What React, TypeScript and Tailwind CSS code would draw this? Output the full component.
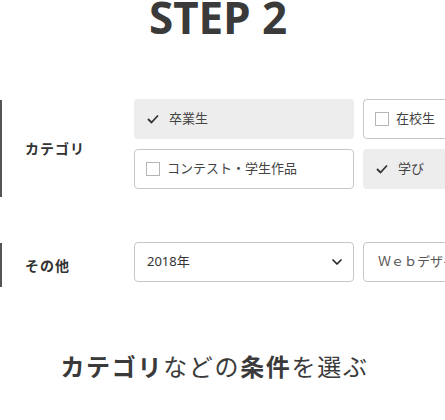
import { ChevronDown } from "lucide-react";

const Check = () => (
  <svg width="12" height="10" viewBox="0 0 12 10" className="shrink-0">
    <polyline points="1,5 4.5,8.5 11,1.5" fill="none" stroke="#333" strokeWidth="1.8" />
  </svg>
);

const Box = () => (
  <span className="w-[14px] h-[14px] border border-[#b5b5b5] bg-white shrink-0" />
);

interface Item {
  label: string;
  checked: boolean;
}

const items: Item[] = [
  { label: "卒業生", checked: true },
  { label: "在校生", checked: false },
  { label: "コンテスト・学生作品", checked: false },
  { label: "学び", checked: true },
];

const App = () => {
  return (
    <div className="w-[445px] h-[420px] overflow-hidden bg-white text-[#333] font-['Noto_Sans','Noto_Sans_CJK_JP',sans-serif]">
      <h1 className="text-center text-[44px] leading-[34px] font-bold text-[#3a3a3a] pr-[9px]">
        STEP 2
      </h1>

      {/* category */}
      <div className="flex mt-[65px]">
        <div className="w-[134px] shrink-0 h-[97px] mt-[1px] border-l-2 border-[#555] flex items-center pl-[23px] text-[14px] font-bold tracking-[1px]">
          カテゴリ
        </div>
        <div className="grid grid-cols-[220px_220px] grid-rows-[40px_40px] gap-x-[9px] gap-y-[10px] shrink-0">
          {items.map((item) => (
            <div
              key={item.label}
              className={
                item.checked
                  ? "h-[40px] rounded-[4px] bg-[#ededed] flex items-center gap-[10px] pl-[13px] text-[13px] text-[#444]"
                  : "h-[40px] rounded-[4px] bg-white border border-[#c6c6c6] flex items-center gap-[7px] pl-[11px] text-[13px] text-[#444]"
              }
            >
              {item.checked ? <Check /> : <Box />}
              <span>{item.label}</span>
            </div>
          ))}
        </div>
      </div>

      {/* other */}
      <div className="flex mt-[45px]">
        <div className="w-[134px] shrink-0 h-[44px] mt-[1px] border-l-2 border-[#555] flex items-center pl-[23px] text-[14px] font-bold tracking-[1px]">
          その他
        </div>
        <div className="flex gap-[9px] shrink-0">
          <div className="w-[220px] h-[40px] rounded-[4px] border border-[#c6c6c6] flex items-center justify-between pl-[12px] pr-[8px] text-[13px]">
            <span>2018年</span>
            <ChevronDown size={16} strokeWidth={2.5} color="#222" />
          </div>
          <div className="w-[220px] h-[40px] rounded-[4px] border border-[#c6c6c6] flex items-center pl-[14px] text-[13px] text-[#555] whitespace-nowrap">
            Ｗｅｂデザイン
          </div>
        </div>
      </div>

      <p className="mt-[64px] pr-[16px] text-center text-[24px] leading-[32px] tracking-[0.07em] text-[#3a3a3a]">
        <span className="font-bold">カテゴリ</span>などの<span className="font-bold">条件</span>を選ぶ
      </p>
    </div>
  );
};

export default App;
